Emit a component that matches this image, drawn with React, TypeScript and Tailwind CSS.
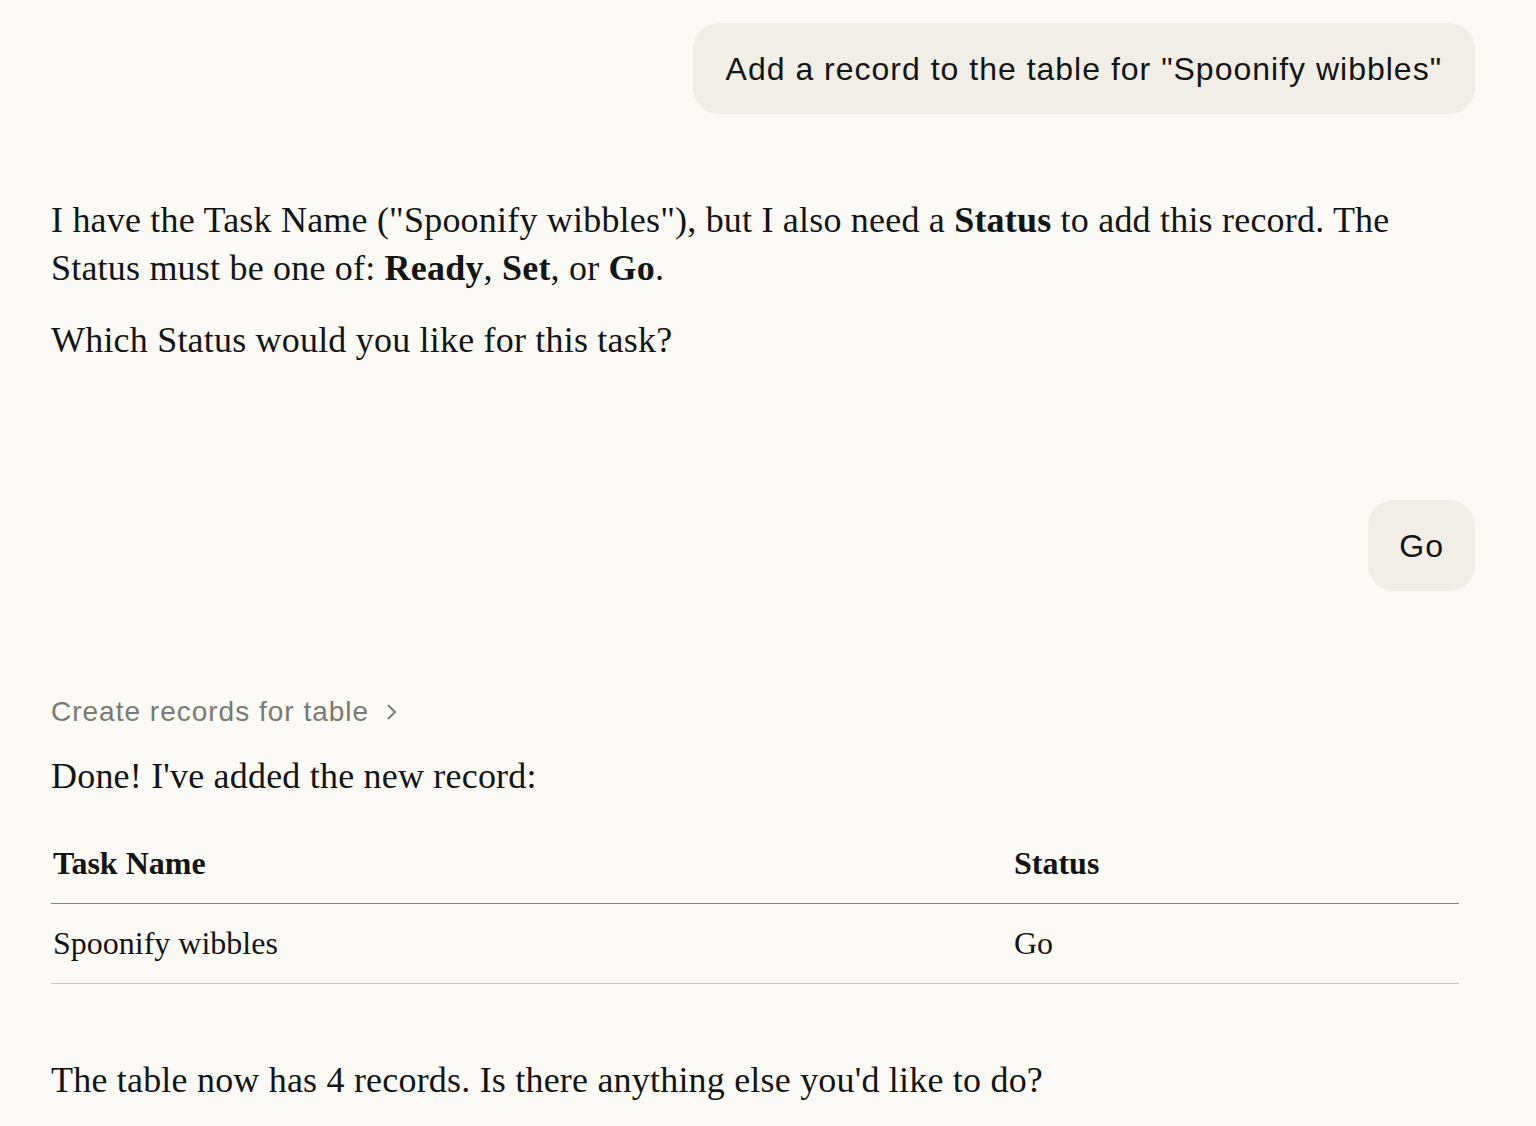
import React from 'react';

const serif = { fontFamily: '"Liberation Serif", "DejaVu Serif", serif' };
const sans = { fontFamily: '"Liberation Sans", Arial, sans-serif' };

function UserBubble({ children, narrow }: { children: React.ReactNode; narrow?: boolean }) {
    return (
        <div className="flex justify-end">
            <div
                className={`bg-[#f0eee6] rounded-[26px] h-[91px] flex items-center text-[32px] tracking-[1px] text-[#141413] ${narrow ? 'px-[31px]' : 'px-[33px]'}`}
                style={sans}
            >
                {children}
            </div>
        </div>
    );
}

export default function App() {
    return (
        <div className="min-h-[1126px] bg-[#faf9f5] text-[#141413] overflow-hidden">
            <div className="ml-[51px] w-[1424px] pt-[23px]">
                {/* First user message */}
                <UserBubble>Add a record to the table for "Spoonify wibbles"</UserBubble>

                {/* Assistant reply */}
                <div className="mt-[82px] text-[36px] tracking-[0.2px] leading-[48px]" style={serif}>
                    <p>
                        I have the Task Name ("Spoonify wibbles"), but I also need a <b>Status</b> to add this record. The
                        Status must be one of: <b>Ready</b>, <b>Set</b>, or <b>Go</b>.
                    </p>
                    <p className="mt-[24px]">Which Status would you like for this task?</p>
                </div>

                {/* Second user message */}
                <div className="mt-[136px]">
                    <UserBubble narrow>Go</UserBubble>
                </div>

                {/* Tool call */}
                <div className="mt-[101px] flex items-center gap-[16px] text-[28px] tracking-[1px] text-[#7b7970] h-[40px]" style={sans}>
                    <span>Create records for table</span>
                    <svg width="14" height="20" viewBox="0 0 14 20" fill="none" stroke="currentColor" strokeWidth="2">
                        <path d="M3 3l7 7-7 7" />
                    </svg>
                </div>

                <p className="mt-[20px] text-[36px] tracking-[0.2px] leading-[48px]" style={serif}>
                    Done! I've added the new record:
                </p>

                {/* Table */}
                <table className="mt-[43px] w-[1408px] text-[32px] leading-[40px] border-collapse" style={serif}>
                    <thead>
                        <tr className="border-b border-[#83817b]">
                            <th className="text-left font-bold h-[60px] pl-[2px] align-top w-[963px]">Task Name</th>
                            <th className="text-left font-bold align-top">Status</th>
                        </tr>
                    </thead>
                    <tbody>
                        <tr className="border-b border-[#c8c6bf]">
                            <td className="h-[80px] pl-[2px] align-middle">Spoonify wibbles</td>
                            <td className="align-middle">Go</td>
                        </tr>
                    </tbody>
                </table>

                <p className="mt-[72px] text-[36px] tracking-[0.2px] leading-[48px]" style={serif}>
                    The table now has 4 records. Is there anything else you'd like to do?
                </p>
            </div>
        </div>
    );
}
